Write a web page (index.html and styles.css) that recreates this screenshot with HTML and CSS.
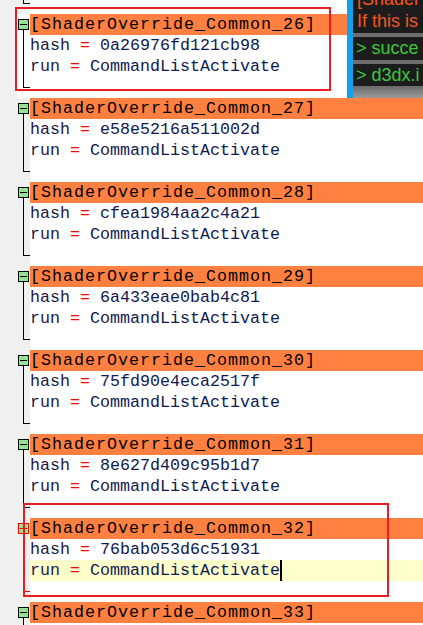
FILE: index.html
```html
<!DOCTYPE html>
<html lang="en">
<head>
<meta charset="utf-8">
<title>d3dx.ini</title>
<link rel="stylesheet" href="styles.css">
</head>
<body>
<div class="screen">
  <div class="editor">
    <div class="line tail"><span class="gutter"></span><span class="fold"></span><span class="code"></span></div>

    <div class="line head lit"><span class="gutter"></span><span class="fold"><i class="box"></i></span><span class="code"><span class="sec">[ShaderOverride_Common_26]</span></span></div>
    <div class="line body lit"><span class="gutter"></span><span class="fold"></span><span class="code"><span class="key">hash</span> <span class="op">=</span> <span class="val">0a26976fd121cb98</span></span></div>
    <div class="line body lit"><span class="gutter"></span><span class="fold"></span><span class="code"><span class="key">run</span> <span class="op">=</span> <span class="val">CommandListActivate</span></span></div>
    <div class="line tail lit"><span class="gutter"></span><span class="fold"></span><span class="code"></span></div>

    <div class="line head"><span class="gutter"></span><span class="fold"><i class="box"></i></span><span class="code"><span class="sec">[ShaderOverride_Common_27]</span></span></div>
    <div class="line body"><span class="gutter"></span><span class="fold"></span><span class="code"><span class="key">hash</span> <span class="op">=</span> <span class="val">e58e5216a511002d</span></span></div>
    <div class="line body"><span class="gutter"></span><span class="fold"></span><span class="code"><span class="key">run</span> <span class="op">=</span> <span class="val">CommandListActivate</span></span></div>
    <div class="line tail"><span class="gutter"></span><span class="fold"></span><span class="code"></span></div>

    <div class="line head"><span class="gutter"></span><span class="fold"><i class="box"></i></span><span class="code"><span class="sec">[ShaderOverride_Common_28]</span></span></div>
    <div class="line body"><span class="gutter"></span><span class="fold"></span><span class="code"><span class="key">hash</span> <span class="op">=</span> <span class="val">cfea1984aa2c4a21</span></span></div>
    <div class="line body"><span class="gutter"></span><span class="fold"></span><span class="code"><span class="key">run</span> <span class="op">=</span> <span class="val">CommandListActivate</span></span></div>
    <div class="line tail"><span class="gutter"></span><span class="fold"></span><span class="code"></span></div>

    <div class="line head"><span class="gutter"></span><span class="fold"><i class="box"></i></span><span class="code"><span class="sec">[ShaderOverride_Common_29]</span></span></div>
    <div class="line body"><span class="gutter"></span><span class="fold"></span><span class="code"><span class="key">hash</span> <span class="op">=</span> <span class="val">6a433eae0bab4c81</span></span></div>
    <div class="line body"><span class="gutter"></span><span class="fold"></span><span class="code"><span class="key">run</span> <span class="op">=</span> <span class="val">CommandListActivate</span></span></div>
    <div class="line tail"><span class="gutter"></span><span class="fold"></span><span class="code"></span></div>

    <div class="line head"><span class="gutter"></span><span class="fold"><i class="box"></i></span><span class="code"><span class="sec">[ShaderOverride_Common_30]</span></span></div>
    <div class="line body"><span class="gutter"></span><span class="fold"></span><span class="code"><span class="key">hash</span> <span class="op">=</span> <span class="val">75fd90e4eca2517f</span></span></div>
    <div class="line body"><span class="gutter"></span><span class="fold"></span><span class="code"><span class="key">run</span> <span class="op">=</span> <span class="val">CommandListActivate</span></span></div>
    <div class="line tail"><span class="gutter"></span><span class="fold"></span><span class="code"></span></div>

    <div class="line head"><span class="gutter"></span><span class="fold"><i class="box"></i></span><span class="code"><span class="sec">[ShaderOverride_Common_31]</span></span></div>
    <div class="line body"><span class="gutter"></span><span class="fold"></span><span class="code"><span class="key">hash</span> <span class="op">=</span> <span class="val">8e627d409c95b1d7</span></span></div>
    <div class="line body"><span class="gutter"></span><span class="fold"></span><span class="code"><span class="key">run</span> <span class="op">=</span> <span class="val">CommandListActivate</span></span></div>
    <div class="line tail"><span class="gutter"></span><span class="fold"></span><span class="code"></span></div>

    <div class="line head act"><span class="gutter"></span><span class="fold"><i class="box"></i></span><span class="code"><span class="sec">[ShaderOverride_Common_32]</span></span></div>
    <div class="line body act"><span class="gutter"></span><span class="fold"></span><span class="code"><span class="key">hash</span> <span class="op">=</span> <span class="val">76bab053d6c51931</span></span></div>
    <div class="line body act current"><span class="gutter"></span><span class="fold"></span><span class="code"><span class="key">run</span> <span class="op">=</span> <span class="val">CommandListActivate</span><i class="caret"></i></span></div>
    <div class="line tail act"><span class="gutter"></span><span class="fold"></span><span class="code"></span></div>

    <div class="line head"><span class="gutter"></span><span class="fold"><i class="box"></i></span><span class="code"><span class="sec">[ShaderOverride_Common_33]</span></span></div>
    <div class="line body"><span class="gutter"></span><span class="fold"></span><span class="code"></span></div>
  </div>

  <div class="overlay">
    <div class="ov-err">
      <div class="ov-err-text">[Shader<br>If this is</div>
    </div>
    <div class="ov-sep"></div>
    <div class="ov-row ov-row-a">&gt; succe</div>
    <div class="ov-sep"></div>
    <div class="ov-row ov-row-b">&gt; d3dx.i</div>
    <div class="ov-foot"></div>
  </div>

  <div class="mark mark-1"></div>
  <div class="mark mark-2"></div>
</div>
</body>
</html>
```

FILE: styles.css
```css
html, body {
  margin: 0;
  padding: 0;
  background: #ffffff;
}

body {
  width: 423px;
  height: 625px;
  overflow: hidden;
}

.screen {
  position: relative;
  width: 423px;
  height: 625px;
  overflow: hidden;
}

.editor {
  margin-top: -7px;
  display: flex;
  flex-direction: column;
  --fl: #000000;
  --mbg: #f0f0f0;
}

.line {
  display: flex;
  height: 21px;
}

.line.act {
  --fl: #ff0000;
}

.gutter {
  width: 17px;
  flex: none;
  background: #f0f0f0;
}

.fold {
  width: 13px;
  flex: none;
  display: flex;
  align-items: flex-start;
  background: var(--mbg);
}

.line.lit .fold {
  --mbg: #ffffff;
}

.body .fold {
  background:
    linear-gradient(var(--fl), var(--fl)) 6px 0 / 1px 100% no-repeat,
    var(--mbg);
}

.tail .fold {
  background:
    linear-gradient(var(--fl), var(--fl)) 6px 0 / 1px 11px no-repeat,
    linear-gradient(var(--fl), var(--fl)) 6px 10px / 7px 1px no-repeat,
    var(--mbg);
}

.head .fold {
  background:
    linear-gradient(var(--fl), var(--fl)) 6px 16px / 1px 5px no-repeat,
    var(--mbg);
}

.box {
  display: block;
  box-sizing: border-box;
  width: 11px;
  height: 11px;
  margin: 5px 0 0 1px;
  border: 1px solid var(--fl);
  background:
    linear-gradient(var(--fl), var(--fl)) center / 7px 1px no-repeat,
    #94e294;
}

.code {
  flex: 1;
  min-width: 0;
  white-space: pre;
  font-family: "Liberation Mono", "DejaVu Sans Mono", monospace;
  font-size: 16.6667px;
  line-height: 21px;
  color: #000000;
  overflow: hidden;
}

.head .code {
  background: #ff8040;
}

.current .code {
  background: #ffffcc;
}

.sec {
  letter-spacing: 1px;
  color: #000000;
}

.key {
  color: #1c1a48;
}

.op {
  color: #ff0000;
}

.val {
  color: #101a50;
}

.caret {
  display: inline-block;
  width: 2px;
  height: 21px;
  vertical-align: top;
  background: #000000;
}

/* overlay window in top-right */
.overlay {
  position: absolute;
  left: 347px;
  top: 0;
  width: 76px;
  height: 98px;
  box-sizing: border-box;
  border-left: 6px solid #12a0e6;
  background: #1c1c1c;
  overflow: hidden;
  display: flex;
  flex-direction: column;
  font-family: "Liberation Sans", Arial, sans-serif;
  font-size: 18px;
  white-space: nowrap;
}

.ov-err {
  height: 33px;
  flex: none;
  padding-left: 4px;
  color: #f4561e;
}

.ov-err-text {
  margin-top: -12px;
  line-height: 22px;
}

.ov-sep {
  height: 4px;
  flex: none;
  background: #6e6e6e;
}

.ov-row {
  flex: none;
  padding-left: 3px;
  color: #3cc83c;
  background: #1c1c1c;
}

.ov-row-a {
  height: 23px;
  line-height: 23px;
}

.ov-row-b {
  height: 21px;
  line-height: 21px;
}

.ov-sep + .ov-row-b {
  margin-top: 1px;
}

.ov-foot {
  flex: 1;
  background: linear-gradient(#6a6a6a, #9a9a9a);
}

/* red annotation rectangles */
.mark {
  position: absolute;
  box-sizing: border-box;
  border: 2px solid #ed1c24;
  pointer-events: none;
}

.mark-1 {
  left: 15px;
  top: 7px;
  width: 316px;
  height: 84px;
}

.mark-2 {
  left: 23px;
  top: 503px;
  width: 366px;
  height: 94px;
}
```
